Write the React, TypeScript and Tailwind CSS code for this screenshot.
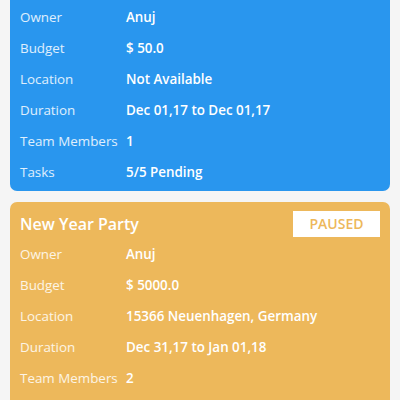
import clsx from "clsx";

type Row = [string, string];

type Project = {
  title: string;
  status: string;
  tone: "blue" | "orange";
  rows: Row[];
};

const projects: Project[] = [
  {
    title: "Launch Event",
    status: "ACTIVE",
    tone: "blue",
    rows: [
      ["Owner", "Anuj"],
      ["Budget", "$ 50.0"],
      ["Location", "Not Available"],
      ["Duration", "Dec 01,17 to Dec 01,17"],
      ["Team Members", "1"],
      ["Tasks", "5/5 Pending"],
    ],
  },
  {
    title: "New Year Party",
    status: "PAUSED",
    tone: "orange",
    rows: [
      ["Owner", "Anuj"],
      ["Budget", "$ 5000.0"],
      ["Location", "15366 Neuenhagen, Germany"],
      ["Duration", "Dec 31,17 to Jan 01,18"],
      ["Team Members", "2"],
      ["Tasks", "0/3 Pending"],
    ],
  },
];

function ProjectCard({ project }: { project: Project }) {
  const isBlue = project.tone === "blue";
  return (
    <section
      className={clsx(
        "rounded-[7px] px-[10px] pt-[9px] pb-[3px]",
        isBlue ? "bg-[#2996ee]" : "bg-[#edb85b]",
      )}
    >
      <div className="flex h-[26px] items-center justify-between">
        <h2 className="text-[16px] font-semibold leading-none text-white">{project.title}</h2>
        <span
          className={clsx(
            "flex h-[26px] w-[87px] items-center justify-center bg-white text-[14px] font-semibold leading-none",
            isBlue ? "text-[#2996ee]" : "text-[#edb85b]",
          )}
        >
          {project.status}
        </span>
      </div>
      <div className="mt-[2px]">
        {project.rows.map(([label, value]) => (
          <div key={label} className="flex h-[31px] items-center text-[13.4px] leading-none">
            <span className="w-[106px] shrink-0 text-white/85">{label}</span>
            <span className="font-semibold text-white">{value}</span>
          </div>
        ))}
      </div>
    </section>
  );
}

export default function App() {
  return (
    <div
      className="h-[400px] overflow-hidden bg-[#f5f5f5]"
      style={{ fontFamily: '"Open Sans", sans-serif' }}
    >
      <div className="mt-[-35px] flex flex-col gap-[11px] px-[10px]">
        {projects.map((p) => (
          <ProjectCard key={p.title} project={p} />
        ))}
      </div>
    </div>
  );
}
